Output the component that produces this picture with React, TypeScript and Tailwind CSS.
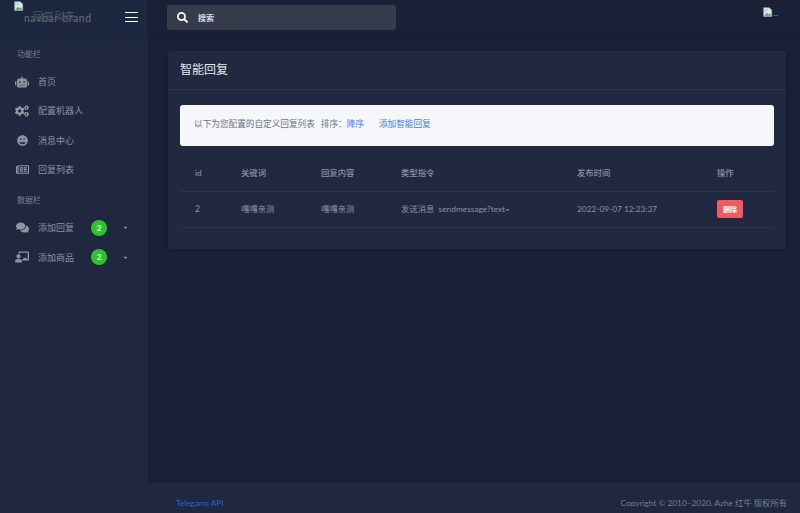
import { FaRobot, FaCogs, FaGrinBeam, FaRegNewspaper, FaComments, FaChalkboardTeacher, FaSearch, FaCaretDown } from "react-icons/fa";
import type { ReactNode } from "react";

const font = { fontFamily: '"Lato", "Noto Sans CJK SC", sans-serif' };

function Broken({ cls }: { cls: string }) {
  return (
    <svg viewBox="0 0 16 16" className={cls}>
      <path d="M1 1h9l4 4v10H1z" fill="#dfe6f2" stroke="#9aa3b2" strokeWidth="1" />
      <path d="M2 14l4-5 3 3 2-2 2 4z" fill="#4caf50" />
      <path d="M2 3h6v4H2z" fill="#b9d2f5" />
    </svg>
  );
}

function NavItem({ icon, label, badge }: { icon: ReactNode; label: string; badge?: boolean }) {
  return (
    <div className="flex h-[29.3px] items-center pl-[15px] text-[#8b92a0]">
      <span className="mr-[9px] flex w-[14px] justify-center text-[#8f95a2]">{icon}</span>
      <span className="text-[9px] leading-none">{label}</span>
      {badge && (
        <>
          <span className="ml-[17px] flex h-4 w-4 items-center justify-center rounded-full bg-[#2bc52b] text-[8px] font-bold text-white">2</span>
          <FaCaretDown className="ml-[15px] text-[7px] text-[#8b92a0]" />
        </>
      )}
    </div>
  );
}

export default function App() {
  return (
    <div className="flex h-[513px] w-[800px] overflow-hidden bg-[#1a2035] text-[#8b92a0]" style={font}>
      <aside className="flex w-[148px] shrink-0 flex-col bg-[#1f283e]">
        <div className="relative h-[36px] shrink-0 bg-[#1e2740] shadow-[0_1px_3px_rgba(0,0,0,0.15)]">
          <Broken cls="absolute left-[14px] top-[1px] h-[10px] w-[10px]" />
          <span className="absolute left-[24px] top-[11px] text-[10.5px] leading-[14px] tracking-[0.5px] text-[#666e7e]">navbar-brand</span>
          <span className="absolute left-[33px] top-[9px] text-[10px] leading-[14px] tracking-[0.5px] text-[#4a5262]">回复列表</span>
          <div className="absolute left-[125px] top-[12px] flex w-[13px] flex-col gap-[3.4px]">
            <i className="h-[1.2px] bg-white" />
            <i className="h-[1.2px] bg-white" />
            <i className="h-[1.2px] bg-white" />
          </div>
        </div>
        <div className="pt-[12px]">
          <div className="pb-[7px] pl-[17px] text-[8px] leading-[12px] text-[#7a8190]">功能栏</div>
          <NavItem icon={<FaRobot className="text-[14px]" />} label="首页" />
          <NavItem icon={<FaCogs className="text-[14px]" />} label="配置机器人" />
          <NavItem icon={<FaGrinBeam className="text-[11px]" />} label="消息中心" />
          <NavItem icon={<FaRegNewspaper className="text-[13px]" />} label="回复列表" />
          <div className="pb-[7px] pl-[17px] pt-[10px] text-[8px] leading-[12px] text-[#7a8190]">数据栏</div>
          <NavItem icon={<FaComments className="text-[13px]" />} label="添加回复" badge />
          <NavItem icon={<FaChalkboardTeacher className="text-[14px]" />} label="添加商品" badge />
        </div>
      </aside>
      <div className="flex min-w-0 flex-1 flex-col">
        <header className="relative flex h-[36px] shrink-0 items-center bg-[#1a2035] pl-[19px] shadow-[0_1px_3px_rgba(0,0,0,0.12)]">
          <div className="mt-[-1px] flex h-[25px] w-[229px] items-center rounded-[3px] bg-[#373c4c] pl-[10px]">
            <FaSearch className="text-[11px] text-white" />
            <span className="ml-[10px] text-[8px] font-bold text-[#d8dbe0]">搜索</span>
          </div>
          <Broken cls="absolute left-[615px] top-[7px] h-[10px] w-[10px]" />
          <i className="absolute left-[625px] top-[15px] h-px w-[5px] bg-[#2a5fb8]" />
        </header>
        <main className="flex-1 pl-[20px] pr-[14px] pt-[15px]">
          <section className="h-[198px] rounded-[4px] bg-[#202940] shadow-[0_1px_3px_rgba(0,0,0,0.15)]">
            <div className="flex h-[39px] items-center border-b border-[#2a3348] pl-[12px] text-[12px] font-normal text-[#e6e9ef]">智能回复</div>
            <div className="mx-[12px] mt-[15px] flex h-[41px] items-center rounded-[3px] bg-[#f5f7fa] pb-[2px] pl-[14px] text-[8.64px] text-[#6e7480]">
              <span>以下为您配置的自定义回复列表</span>
              <span className="ml-[6px]">排序：</span>
              <span className="text-[#3e80ea]">降序</span>
              <span className="ml-[15px] text-[#3e80ea]">添加智能回复</span>
            </div>
            <table className="mx-[12px] mt-[9px] w-[594px] table-fixed border-collapse text-left text-[8.33px] text-[#8b92a0]">
              <thead>
                <tr className="h-[36px] border-b border-[#2a3348]">
                  <th className="w-[61px] pl-[15px] font-medium">id</th>
                  <th className="w-[80px] font-medium">关键词</th>
                  <th className="w-[80px] font-medium">回复内容</th>
                  <th className="w-[176px] font-medium">类型指令</th>
                  <th className="w-[140px] font-medium">发布时间</th>
                  <th className="font-medium">操作</th>
                </tr>
              </thead>
              <tbody>
                <tr className="h-[36px] border-b border-[#2a3348]">
                  <td className="pl-[15px] text-[8.5px]">2</td>
                  <td>嘎嘎亲测</td>
                  <td>嘎嘎亲测</td>
                  <td>发送消息&nbsp; sendmessage?text=</td>
                  <td>2022-09-07 12:23:37</td>
                  <td>
                    <span className="flex h-[18px] w-[26px] items-center justify-center rounded-[2px] bg-[#f25961] text-[7px] font-bold text-[#fff]">删除</span>
                  </td>
                </tr>
              </tbody>
            </table>
          </section>
        </main>
        <footer className="flex h-[30px] shrink-0 items-center justify-between bg-[#1f283e] pl-[28px] pr-[13px] pt-[11px] text-[8.3px]">
          <span className="text-[#1f66d8]">Telegarm API</span>
          <span className="text-[#76808f]">Copyright © 2010–2020. Azhe 红牛 版权所有</span>
        </footer>
      </div>
    </div>
  );
}
